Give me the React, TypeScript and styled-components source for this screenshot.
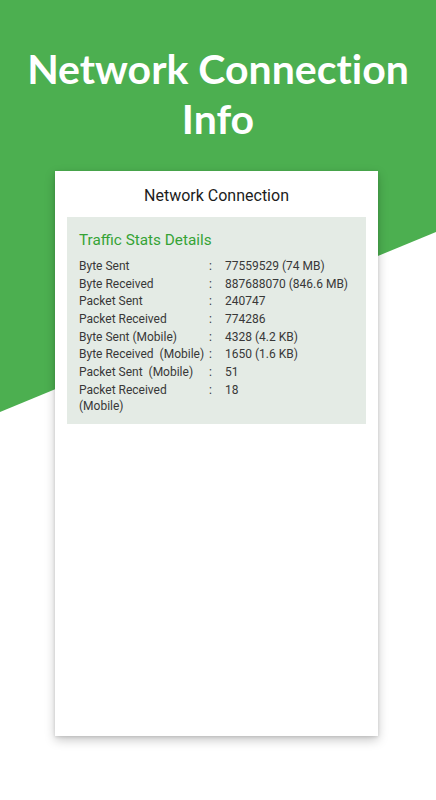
import React from "react";
import styled, { createGlobalStyle } from "styled-components";

const GlobalStyle = createGlobalStyle`
  html, body { margin: 0; padding: 0; background: #ffffff; }
  body { font-family: Roboto, "Noto Sans", sans-serif; }
  * { box-sizing: border-box; }
`;

const Page = styled.div`
  position: relative;
  width: 436px;
  height: 800px;
  overflow: hidden;
  background: #ffffff;
  display: flex;
  flex-direction: column;
  align-items: flex-start;

  &::before {
    content: "";
    position: absolute;
    left: 0;
    top: 0;
    width: 100%;
    height: 412px;
    background: #4caf50;
    clip-path: polygon(0 0, 100% 0, 100% 232px, 0 412px);
    z-index: 0;
  }
`;

const Title = styled.h1`
  position: relative;
  z-index: 1;
  margin: 0;
  padding-top: 44px;
  width: 100%;
  text-align: center;
  color: #ffffff;
  font-family: Lato, "Open Sans", sans-serif;
  font-weight: 700;
  font-size: 41px;
  line-height: 50px;
  letter-spacing: 0px;
  font-variant-ligatures: none;
  font-feature-settings: "liga" 0, "dlig" 0;
`;

const Card = styled.div`
  position: relative;
  z-index: 1;
  margin-top: 27px;
  margin-left: 55px;
  width: 323px;
  height: 565px;
  background: #ffffff;
  box-shadow: 0 4px 10px rgba(0, 0, 0, 0.22), 0 1px 3px rgba(0, 0, 0, 0.12);
  display: flex;
  flex-direction: column;
  padding: 0 12px;
`;

const CardHeader = styled.div`
  height: 46px;
  display: flex;
  align-items: center;
  justify-content: center;
  font-size: 16px;
  color: #1c1c1c;
  padding-top: 2px;
`;

const Panel = styled.div`
  background: #e4ebe5;
  padding: 13px 12px 10px 12px;
  display: flex;
  flex-direction: column;
`;

const PanelTitle = styled.div`
  color: #35a335;
  font-size: 15.3px;
  line-height: 20px;
  margin-bottom: 8px;
`;

const Rows = styled.div`
  display: grid;
  grid-template-columns: 130px 16px 1fr;
  row-gap: 1.7px;
  font-size: 12px;
  line-height: 16px;
  color: #383838;
`;

const Cell = styled.div``;

const rows: [string, string][] = [
  ["Byte Sent", "77559529 (74 MB)"],
  ["Byte Received", "887688070 (846.6 MB)"],
  ["Packet Sent", "240747"],
  ["Packet Received", "774286"],
  ["Byte Sent (Mobile)", "4328 (4.2 KB)"],
  ["Byte Received\u00a0 (Mobile)", "1650 (1.6 KB)"],
  ["Packet Sent\u00a0 (Mobile)", "51"],
  ["Packet Received (Mobile)", "18"],
];

export default function App() {
  return (
    <>
      <GlobalStyle />
      <Page>
        <Title>
          Network Connection
          <br />
          Info
        </Title>
        <Card>
          <CardHeader>Network Connection</CardHeader>
          <Panel>
            <PanelTitle>Traffic Stats Details</PanelTitle>
            <Rows>
              {rows.map(([k, v]) => (
                <React.Fragment key={k}>
                  <Cell>{k}</Cell>
                  <Cell>:</Cell>
                  <Cell>{v}</Cell>
                </React.Fragment>
              ))}
            </Rows>
          </Panel>
        </Card>
      </Page>
    </>
  );
}
